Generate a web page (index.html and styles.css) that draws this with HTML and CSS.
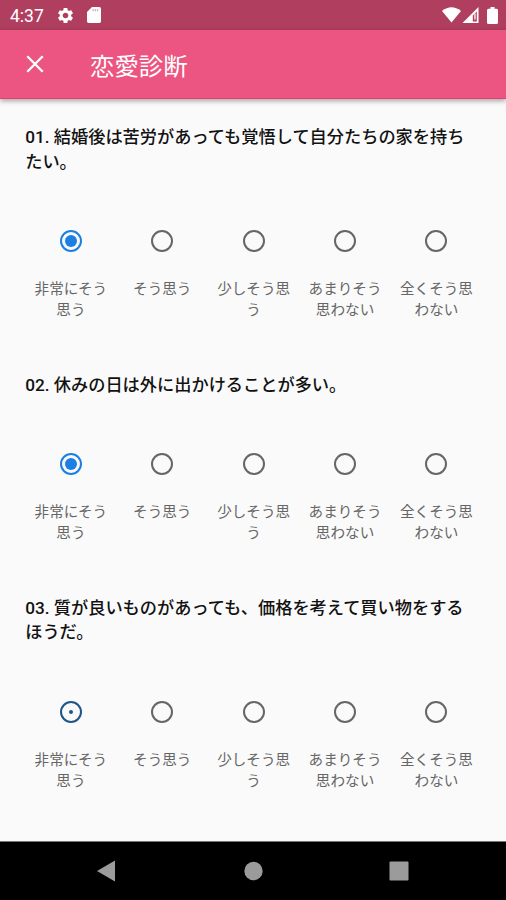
FILE: index.html
```html
<!DOCTYPE html>
<html lang="ja">
<head>
    <meta charset="UTF-8">
    <meta name="viewport" content="width=device-width, initial-scale=1.0">
    <title>恋愛診断</title>
    <link rel="stylesheet" href="styles.css">
</head>
<body>
    <div class="status-bar">
        <span class="clock">4:37</span>
        <svg class="icon-gear" width="19" height="19" viewBox="0 0 24 24"><path d="M19.14 12.94c.04-.3.06-.61.06-.94 0-.32-.02-.64-.07-.94l2.03-1.58c.18-.14.23-.41.12-.61l-1.92-3.32c-.12-.22-.37-.29-.59-.22l-2.39.96c-.5-.38-1.03-.7-1.62-.94l-.36-2.54c-.04-.24-.24-.41-.48-.41h-3.84c-.24 0-.43.17-.47.41l-.36 2.54c-.59.24-1.13.57-1.62.94l-2.39-.96c-.22-.08-.47 0-.59.22L2.74 8.87c-.12.21-.08.47.12.61l2.03 1.58c-.05.3-.09.63-.09.94s.02.64.07.94l-2.03 1.58c-.18.14-.23.41-.12.61l1.92 3.32c.12.22.37.29.59.22l2.39-.96c.5.38 1.03.7 1.62.94l.36 2.54c.05.24.24.41.48.41h3.84c.24 0 .44-.17.47-.41l.36-2.54c.59-.24 1.13-.56 1.62-.94l2.39.96c.22.08.47 0 .59-.22l1.92-3.32c.12-.22.07-.47-.12-.61l-2.01-1.58zM12 15.600c-1.980 0-3.600-1.620-3.600-3.600s1.620-3.600 3.600-3.600 3.600 1.620 3.600 3.600-1.620 3.600-3.600 3.600z"/></svg>
        <svg class="icon-card" width="14" height="16" viewBox="0 0 14 16"><path d="M5 0h7.3Q14 0 14 1.7v12.6Q14 16 12.300 16H1.700Q0 16 0 14.300V5z"/><path class="card-slots" d="M5.500 3.200h6"/></svg>
        <div class="status-right">
            <svg width="19" height="16" viewBox="0 0 19 16"><path d="M9.500 15.500L0 4Q9.500-3.500 19 4z"/></svg>
            <svg width="17" height="16" viewBox="0 0 17 16"><path fill-rule="evenodd" d="M16.500 0v16H0.500zM14.800 4.500L10.800 8.500V14.500H14.800z"/><path d="M12.300 6.500h1.300v6h-1.300z"/></svg>
            <svg class="icon-battery" width="11" height="17" viewBox="0 0 11 17"><path d="M3.500 0h4v1.700h2Q11 1.700 11 3.200v12.300Q11 17 9.500 17h-8Q0 17 0 15.500V3.200Q0 1.700 1.500 1.700h2z"/></svg>
        </div>
    </div>

    <header class="app-bar">
        <svg class="close" width="18" height="18" viewBox="0 0 18 18"><path d="M1.300 1.300l15.400 15.400M16.700 1.300L1.300 16.700"/></svg>
        <h1>恋愛診断</h1>
    </header>

    <main class="questions">
        <section class="question">
            <h2>01. 結婚後は苦労があっても覚悟して自分たちの家を持ちたい。</h2>
            <div class="options">
                <label class="option"><span class="radio checked"></span>非常にそう思う</label>
                <label class="option"><span class="radio"></span>そう思う</label>
                <label class="option"><span class="radio"></span>少しそう思う</label>
                <label class="option"><span class="radio"></span>あまりそう思わない</label>
                <label class="option"><span class="radio"></span>全くそう思わない</label>
            </div>
        </section>

        <section class="question">
            <h2>02. 休みの日は外に出かけることが多い。</h2>
            <div class="options">
                <label class="option"><span class="radio checked"></span>非常にそう思う</label>
                <label class="option"><span class="radio"></span>そう思う</label>
                <label class="option"><span class="radio"></span>少しそう思う</label>
                <label class="option"><span class="radio"></span>あまりそう思わない</label>
                <label class="option"><span class="radio"></span>全くそう思わない</label>
            </div>
        </section>

        <section class="question">
            <h2>03. 質が良いものがあっても、価格を考えて買い物をするほうだ。</h2>
            <div class="options">
                <label class="option"><span class="radio checking"></span>非常にそう思う</label>
                <label class="option"><span class="radio"></span>そう思う</label>
                <label class="option"><span class="radio"></span>少しそう思う</label>
                <label class="option"><span class="radio"></span>あまりそう思わない</label>
                <label class="option"><span class="radio"></span>全くそう思わない</label>
            </div>
        </section>
    </main>

    <nav class="nav-bar">
        <svg width="20" height="22" viewBox="0 0 20 22"><path d="M19 0.500v21L1 11z"/></svg>
        <svg width="20" height="20" viewBox="0 0 20 20"><circle cx="10.500" cy="10" r="9.200"/></svg>
        <svg width="20" height="20" viewBox="0 0 20 20"><rect x="0.500" y="0.500" width="19" height="19" rx="1"/></svg>
    </nav>
</body>
</html>
```
FILE: styles.css
```css
:root {
    --pink: #ec5581;
    --pink-dark: #b03e5f;
    --blue: #1b80e2;
    --blue-dark: #1f5687;
    --grey: #666;
}

* {
    box-sizing: border-box;
    margin: 0;
    padding: 0;
}

body {
    display: flex;
    flex-direction: column;
    height: 100vh;
    overflow: hidden;
    background: #fafafa;
    font-family: Roboto, "Noto Sans CJK JP", sans-serif;
}

svg {
    display: block;
    flex: none;
}

.status-bar {
    display: flex;
    align-items: center;
    flex: none;
    height: 30px;
    padding: 0 8px 0 10px;
    background: var(--pink-dark);
    color: #fff;
    fill: #fff;
}

.clock {
    width: 46px;
    font-size: 17.5px;
    line-height: 30px;
    padding-top: 2px;
}

.icon-card {
    margin-left: 12px;
}

.card-slots {
    stroke: #dba7b5;
    stroke-width: 2;
    stroke-dasharray: 1.3 0.9;
}

.status-right {
    display: flex;
    align-items: center;
    gap: 1px;
    margin-left: auto;
}

.icon-battery {
    margin-left: 7px;
}

.app-bar {
    display: flex;
    align-items: center;
    flex: none;
    height: 69px;
    padding: 0 26px;
    background: var(--pink);
    border-bottom: 1px solid #e83e74;
    box-shadow: 0 2px 5px rgba(0, 0, 0, 0.35);
}

.close {
    stroke: #fff;
    stroke-width: 2.3;
}

.app-bar h1 {
    margin-left: 46px;
    padding-top: 5px;
    color: #fff;
    font-size: 24.4px;
    font-weight: 400;
    line-height: 36px;
}

.questions {
    flex: 1;
    padding: 26px 25.2px 0;
}

.question {
    margin-bottom: 51.2px;
}

.question:last-child {
    margin-bottom: 0;
}

.question h2 {
    padding-right: 12px;
    color: #111;
    font-size: 17.22px;
    font-weight: 500;
    line-height: 24.6px;
}

.options {
    display: grid;
    grid-template-columns: repeat(5, 91.4px);
    margin-top: 56.2px;
}

.option {
    display: flex;
    flex-direction: column;
    align-items: center;
    padding: 0 8px;
    color: var(--grey);
    font-size: 14.6px;
    font-weight: 400;
    line-height: 21px;
    text-align: center;
}

.radio {
    display: flex;
    align-items: center;
    justify-content: center;
    width: 22px;
    height: 22px;
    margin-bottom: 27px;
    border: 2px solid var(--grey);
    border-radius: 50%;
}

.checked {
    border-color: var(--blue);
}

.checked::before {
    content: "";
    width: 12px;
    height: 12px;
    border-radius: 50%;
    background: var(--blue);
}

/* third answer is still animating in */
.checking {
    border-color: var(--blue-dark);
}

.checking::before {
    content: "";
    width: 4px;
    height: 4px;
    border-radius: 50%;
    background: var(--blue-dark);
}

.nav-bar {
    display: flex;
    align-items: center;
    justify-content: space-between;
    flex: none;
    height: 59px;
    padding: 0 97px 0 96px;
    background: #000;
    border-top: 1px solid #777;
    fill: #9b9b9b;
}
```
